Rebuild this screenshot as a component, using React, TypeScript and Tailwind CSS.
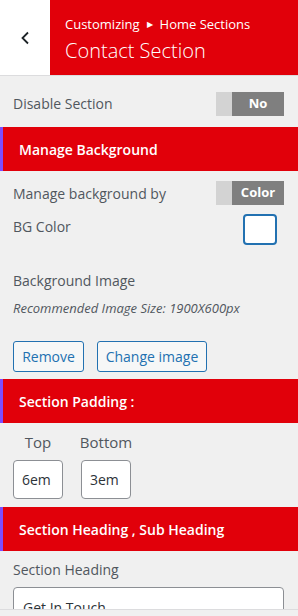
import React from 'react';

const font = { fontFamily: '"Open Sans", "Noto Sans", sans-serif' };

function Toggle({ label }: { label: string }) {
  return (
    <div className="flex h-6 w-[68px]">
      <div className="w-4 bg-[#d3d3d3]" />
      <div className="flex flex-1 items-center justify-center bg-[#7f7f7f] text-[13px] font-bold text-white">
        {label}
      </div>
    </div>
  );
}

function SectionBar({ title }: { title: string }) {
  return (
    <div className="flex h-[44px] items-center border-l-[3px] border-[#7c4dff] bg-[#e1000a] pl-4 text-[14px] font-semibold text-white">
      {title}
    </div>
  );
}

export default function App() {
  return (
    <div className="relative h-[616px] w-[298px] overflow-hidden bg-[#f0f0f0] text-[#50575e]" style={font}>
      <header className="flex h-[76px] border-b border-[#dcdcde]">
        <button className="flex w-[50px] items-center justify-center bg-white text-[#1d2327]">
          <svg width="10" height="14" viewBox="0 0 10 14" fill="none">
            <path d="M8 1.5L2.5 7L8 12.5" stroke="currentColor" strokeWidth="1.8" />
          </svg>
        </button>
        <div className="flex flex-1 flex-col justify-center bg-[#e1000a] pl-[15px] pt-[3px] text-white">
          <div className="flex items-center text-[13px] leading-[18px]">
            Customizing
            <span className="mx-[7px] text-[8px]">▶</span>
            Home Sections
          </div>
          <div className="mt-[5px] text-[20px] font-light leading-[26px]">Contact Section</div>
        </div>
      </header>

      <div className="flex h-[51px] items-center justify-between pl-[13px] pr-[14px] pt-[4px]">
        <span className="text-[14px]">Disable Section</span>
        <Toggle label="No" />
      </div>

      <SectionBar title="Manage Background" />

      <div className="flex h-[42px] items-center justify-between pl-[13px] pr-[14px] pt-[2px]">
        <span className="text-[14px]">Manage background by</span>
        <Toggle label="Color" />
      </div>

      <div className="flex items-start justify-between pl-[13px] pr-[21px] pt-[1px]">
        <span className="mt-[2px] text-[14px]">BG Color</span>
        <div className="h-[31px] w-[34px] rounded-[4px] border-2 border-[#2271b1] bg-white" />
      </div>

      <div className="mt-[26px] pl-[13px] text-[14px] leading-[20px]">Background Image</div>
      <div className="mt-[8px] pl-[13px] text-[13px] italic leading-[18px]">
        Recommended Image Size: 1900X600px
      </div>

      <div className="mt-[24px] flex gap-[13px] pl-[13px]">
        <button className="h-[31px] w-[71px] rounded-[3px] border border-[#2271b1] bg-[#f6f7f7] text-[14px] text-[#2271b1]">
          Remove
        </button>
        <button className="h-[31px] w-[110px] rounded-[3px] border border-[#2271b1] bg-[#f6f7f7] text-[14px] text-[#2271b1]">
          Change image
        </button>
      </div>

      <div className="mt-[7px]">
        <SectionBar title="Section Padding :" />
      </div>

      <div className="flex gap-[18px] pl-[13px] pt-[9px]">
        <div className="flex w-[50px] flex-col items-center">
          <span className="text-[15px] font-medium leading-[20px]">Top</span>
          <div className="mt-[8px] flex h-[39px] w-[50px] items-center rounded-[4px] border border-[#8c8f94] bg-white pl-[8px] text-[14px] text-[#2c3338]">
            6em
          </div>
        </div>
        <div className="flex w-[50px] flex-col items-center">
          <span className="text-[15px] font-medium leading-[20px]">Bottom</span>
          <div className="mt-[8px] flex h-[39px] w-[50px] items-center rounded-[4px] border border-[#8c8f94] bg-white pl-[8px] text-[14px] text-[#2c3338]">
            3em
          </div>
        </div>
      </div>

      <div className="mt-[8px]">
        <SectionBar title="Section Heading , Sub Heading" />
      </div>

      <div className="pl-[13px] pt-[9px] text-[14px] leading-[20px]">Section Heading</div>
      <div className="ml-[13px] mt-[7px] h-[40px] w-[271px] rounded-[4px] border border-[#8c8f94] bg-white pl-[9px] pt-[9px] text-[14px] text-[#2c3338]">
        Get In Touch
      </div>

      <div className="absolute bottom-0 left-0 right-0 h-[7px] border-t border-[#dcdcde] bg-[#f0f0f0]" />
    </div>
  );
}
